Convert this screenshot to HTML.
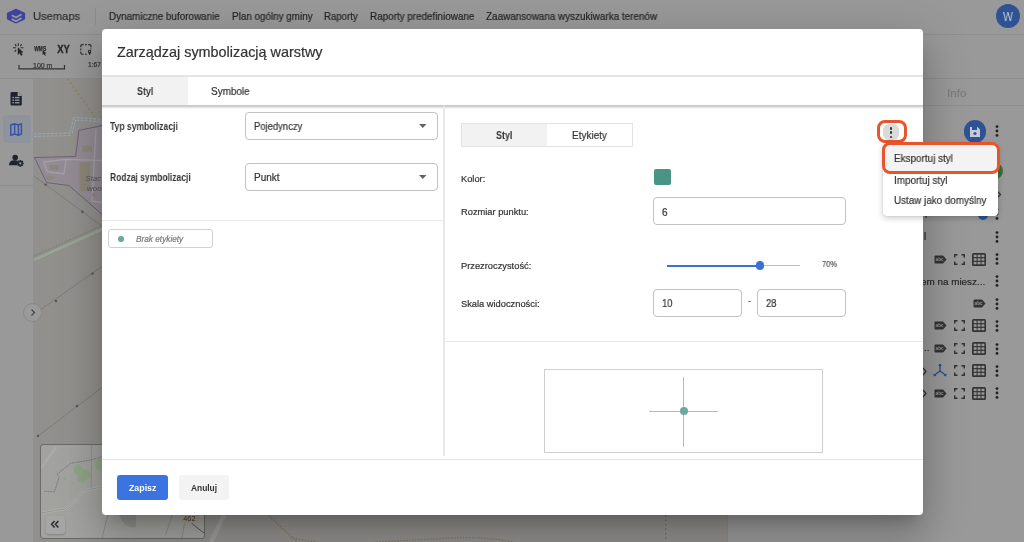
<!DOCTYPE html>
<html><head><meta charset="utf-8"><style>
html,body{margin:0;padding:0}
body{width:1024px;height:542px;position:relative;overflow:hidden;font-family:'Liberation Sans', sans-serif;background:#999}
body>div{position:absolute}
.t{white-space:nowrap;line-height:1;will-change:transform;-webkit-text-stroke:0.2px currentColor}
svg{will-change:transform}
.t[style*="bold"]{-webkit-text-stroke:0}
</style></head><body>
<div style="left:0px;top:0px;width:1024px;height:542px;background:#999999"></div>
<div style="left:34px;top:79px;width:694px;height:463px;background:#92908d"></div>
<svg style="position:absolute;left:0px;top:0px" width="1024" height="542" viewBox="0 0 1024 542"><path d="M34 157.5 L75.6 156.5 L78.9 130.3 L97.9 126.5 L104 125 L104 216 L97.9 210.7 L68.9 185.5 L46.6 182.6 L35.5 159.5 Z" fill="#948c95" stroke="#6c6175" stroke-width="1"/><path d="M43.7 162 L66 159.4 L64 174 L47.5 171.6 Z M66 159.4 L104 160.5 M96 129 L92 201 L104 203" stroke="#a3a1a4" stroke-width="1.3" fill="none"/><g fill="#8d867a"><rect x="82.4" y="145.8" width="9.7" height="5.8"/><rect x="49.5" y="165.2" width="9.7" height="4.8"/><rect x="46.6" y="175.9" width="6.8" height="3.8"/><rect x="79.5" y="162.3" width="10.7" height="29"/><rect x="92.1" y="193.3" width="4.8" height="3"/></g><text x="85.3" y="181.3" font-family="Liberation Sans" font-style="italic" font-size="8" fill="#57525c">Stac</text><text x="87" y="191" font-family="Liberation Sans" font-style="italic" font-size="8" fill="#57525c">woo</text><path d="M67.8 79 L99.3 123" stroke="#8f7f55" stroke-width="1.6" stroke-dasharray="1.5 3" fill="none"/><path d="M34 135.2 L70.8 134.2 L74.7 118.7 L104 120.6" stroke="#98a8b0" stroke-width="3.6" stroke-dasharray="3 1.2" fill="none"/><path d="M34 135.2 L70.8 134.2 L74.7 118.7 L104 120.6" stroke="#92908d" stroke-width="1.4" fill="none"/><path d="M34 176 L104 227.6" stroke="#727272" stroke-width="0.7" fill="none"/><circle cx="45.6" cy="184.6" r="1.2" fill="#555"/><circle cx="82.4" cy="211.7" r="1.2" fill="#555"/><path d="M36 313 L104 265" stroke="#727272" stroke-width="0.7" fill="none"/><circle cx="56" cy="301" r="1.2" fill="#555"/><circle cx="92.4" cy="273.6" r="1.2" fill="#555"/><path d="M38 436 L104 386" stroke="#727272" stroke-width="0.7" fill="none"/><circle cx="38" cy="436" r="1.2" fill="#555"/><circle cx="77" cy="406" r="1.2" fill="#555"/><path d="M34 260 L104 228.5" stroke="#86977d" stroke-width="5" fill="none"/><path d="M34 260 L104 228.5" stroke="#a0a19e" stroke-width="2.6" fill="none"/><path d="M34 256 L104 224.5" stroke="#6f6a72" stroke-width="0.8" stroke-dasharray="1.5 1.5" fill="none"/><path d="M269 515.7 L295 540 L298 542" stroke="#7f765e" stroke-width="1.2" stroke-dasharray="1.5 1.5" fill="none"/><path d="M290 538 L316 542 M370 542.5 Q420 539.5 466 537.5 Q495 538 515 542.5" stroke="#7f765e" stroke-width="1.2" stroke-dasharray="1.5 1.5" fill="none"/><path d="M665.7 515 L665.7 542" stroke="#6e6a58" stroke-width="1.2" stroke-dasharray="1.5 3" fill="none"/><path d="M224 515 L211 542" stroke="#9d9d9b" stroke-width="4.5" fill="none"/></svg>
<div style="left:40px;top:444px;width:164.5px;height:94.5px;border:1px solid #6a6a6a;border-radius:3px;background:#a2a29f;box-sizing:border-box"></div>
<svg style="position:absolute;left:41px;top:445px" width="62" height="92" viewBox="0 0 62 92"><g transform="translate(-41,-445)"><path d="M41 468 L56.2 447" stroke="#abaaa8" stroke-width="3" fill="none"/><path d="M41 513 Q52 511 64.7 509 Q70 505 75.7 500.4 Q80 494 84.2 490.7 Q92 488 104 487.5" stroke="#b0b0ae" stroke-width="2.6" fill="none"/><path d="M41 513 Q52 511 64.7 509 Q70 505 75.7 500.4 Q80 494 84.2 490.7 Q92 488 104 487.5" stroke="#8a8a88" stroke-width="0.7" fill="none"/><path d="M91.6 445 L91.2 488" stroke="#8e8e8c" stroke-width="0.8" fill="none"/><path d="M44.6 491.3 L54.4 491.9 L59.2 477.3 L57.2 474.2 L70.8 463.2 L90.3 460.2 L104 456" stroke="#7a7480" stroke-width="0.9" stroke-dasharray="2 0.8" fill="none"/><path d="M75 466 Q78 462 81 466 Q83 470 87 470 Q92 472 91 477 Q86 479 84 482 Q80 484 77 480 Q79 475 74.5 473 Q73 469 75 466Z" fill="#8fa486"/><path d="M95 462 Q99 457 104 458 L104 472 Q98 472 96 468Z" fill="#8fa486"/><circle cx="65" cy="478.5" r="1.3" fill="#8fa486"/><circle cx="72.5" cy="483" r="0.9" fill="#8fa486"/></g></svg>
<svg style="position:absolute;left:102px;top:515px" width="103" height="24" viewBox="0 0 103 24"><g transform="translate(-102,-515)"><path d="M107.8 515 L102 538 M172.3 515 L165.4 535.3 M186 515 L182 538" stroke="#858583" stroke-width="0.8" fill="none"/><path d="M191.8 523.5 L204 533" stroke="#555" stroke-width="1" fill="none"/><path d="M119 515 Q125 530 136 527 L136 515Z" fill="#939391"/><rect x="181.6" y="513" width="17.6" height="10" rx="1.5" fill="#a59f8e"/><text x="183.3" y="521.3" font-family="Liberation Sans" font-size="7.3" fill="#3a3a3a">462</text></g></svg>
<div style="left:45.5px;top:515.5px;width:19.5px;height:18.5px;background:#a6a6a6;border-radius:3px;box-shadow:0 1px 2px rgba(0,0,0,.2)"></div>
<svg style="position:absolute;left:44px;top:510px" width="24" height="24" viewBox="0 0 24 24"><g transform="translate(-44,-510)"><path d="M54.6 521 L51.6 524.2 L54.6 527.4 M58.4 521 L55.4 524.2 L58.4 527.4" stroke="#2a2a2a" stroke-width="1.5" fill="none"/></g></svg>
<div style="left:0px;top:79px;width:33px;height:463px;background:#999999"></div>
<div style="left:33px;top:79px;width:1px;height:463px;background:#909090"></div>
<div style="left:0px;top:185px;width:33px;height:1px;background:#8c8c8c"></div>
<div style="left:23px;top:302.5px;width:19px;height:19px;border-radius:50%;background:#9a9a9a;border:1px solid #888;box-sizing:border-box"></div>
<svg style="position:absolute;left:29px;top:308px" width="8" height="9" viewBox="0 0 8 9"><path d="M2.5 1.5 L5.5 4.5 L2.5 7.5" stroke="#444" stroke-width="1.2" fill="none"/></svg>
<div style="left:0px;top:34px;width:1024px;height:1px;background:#8e8e8e"></div>
<div style="left:0px;top:78px;width:728px;height:1px;background:#8e8e8e"></div>
<div style="left:728px;top:35px;width:296px;height:507px;background:#999999"></div>
<div style="left:728px;top:78px;width:296px;height:1px;background:#8e8e8e"></div>
<div style="left:728px;top:105px;width:296px;height:1px;background:#8e8e8e"></div>
<div style="left:727px;top:79px;width:1px;height:463px;background:#8c8c8c"></div>
<svg style="position:absolute;left:0px;top:0px" width="32" height="32" viewBox="0 0 32 32"><path d="M16 9.3 L24.5 13.4 L24.5 18.9 L16 23 L7.5 18.9 L7.5 13.4 Z" fill="#3d439e" stroke="#3d439e" stroke-width="1.2" stroke-linejoin="round"/><path d="M11.7 15.2 L16 17.6 L21.6 14.3 M11.7 19 L16 21.3 L21.6 18" stroke="#999" stroke-width="1.7" fill="none"/></svg>
<div class="t" style="left:33px;top:10.97px;font-size:11.5px;color:#2e2e2e;;transform:scaleX(0.9696);transform-origin:0 0">Usemaps</div>
<div style="left:95px;top:8px;width:1px;height:17px;background:#8c8c8c"></div>
<div class="t" style="left:109.4px;top:11.54px;font-size:10px;color:#262626;;transform:scaleX(0.9859);transform-origin:0 0">Dynamiczne buforowanie</div>
<div class="t" style="left:231.8px;top:11.54px;font-size:10px;color:#262626;;transform:scaleX(0.9863);transform-origin:0 0">Plan ogólny gminy</div>
<div class="t" style="left:324.1px;top:11.54px;font-size:10px;color:#262626;;transform:scaleX(0.9624);transform-origin:0 0">Raporty</div>
<div class="t" style="left:369.5px;top:11.54px;font-size:10px;color:#262626;;transform:scaleX(0.9875);transform-origin:0 0">Raporty predefiniowane</div>
<div class="t" style="left:485.5px;top:11.54px;font-size:10px;color:#262626;;transform:scaleX(0.9898);transform-origin:0 0">Zaawansowana wyszukiwarka terenów</div>
<div style="left:995.8px;top:4px;width:24.4px;height:24.4px;border-radius:50%;background:#2e5294"></div>
<div class="t" style="left:1003.2px;top:10.80px;font-size:12.4px;color:#c5ccd8;-webkit-text-stroke:0;transform:scaleX(0.8459);transform-origin:0 0">W</div>
<svg style="position:absolute;left:0px;top:34px" width="110" height="45" viewBox="0 0 110 45"><g transform="translate(0,-34)"><g stroke="#2a2a2a" stroke-width="1.1" fill="none" stroke-linecap="round"><path d="M18.2 43.5 V45.5 M15.3 44.6 L16 45.9 M21.4 44.5 L20.6 45.8 M13.4 47.7 H15.4 M21 47.7 H23 M15 51.4 L15.8 50.2"/></g><path d="M18 47.8 L18 54.4 L19.6 52.9 L21.1 55.4 L22.3 54.8 L20.9 52.4 L23 52.2 Z" fill="#262626" stroke="#262626" stroke-width="0.5" stroke-linejoin="round"/><text x="34.2" y="50.7" font-family="Liberation Sans" font-weight="bold" font-size="6.8" textLength="12" lengthAdjust="spacingAndGlyphs" fill="#2a2a2a" stroke="#2a2a2a" stroke-width="0.25">WMS</text><path d="M42.6 49.9 L42.6 55 L43.8 53.9 L45 55.7 L45.9 55.2 L44.8 53.4 L46.5 53.2 Z" fill="#262626" stroke="#999" stroke-width="0.6" paint-order="stroke" stroke-linejoin="round"/><text x="57.3" y="53.1" font-family="Liberation Sans" font-weight="bold" font-size="10.2" textLength="12.6" lengthAdjust="spacingAndGlyphs" fill="#2a2a2a" stroke="#2a2a2a" stroke-width="0.35">XY</text><path d="M80.8 47.2 V46.1 Q80.8 44.6 82.3 44.6 H83.6 M88.2 44.6 H89.5 Q91 44.6 91 46.1 V47.2 M80.8 51.6 V52.7 Q80.8 54.2 82.3 54.2 H83.6 M85 44.6 H86.8 M80.8 48.6 V50.2 M85 54.2 H86.8 M91 48.5 V49.4" stroke="#2a2a2a" stroke-width="1.15" fill="none"/><path d="M88 51.3 A1.6 1.6 0 0 1 91.2 51.3 Q91.2 53 89.6 55.2 Q88 53 88 51.3Z" fill="#262626"/><circle cx="89.6" cy="51.3" r="0.6" fill="#999"/><path d="M19 65 V68.8 H64.5 V65" stroke="#333" stroke-width="1.2" fill="none"/></g></svg>
<div class="t" style="left:33px;top:61.67px;font-size:7px;color:#333;">100 m</div>
<div class="t" style="left:87.8px;top:62.21px;font-size:6.6px;color:#333;">1:67</div>
<svg style="position:absolute;left:0px;top:80px" width="34" height="100" viewBox="0 0 34 100"><g transform="translate(0,-80)"><path d="M11.5 91.9 H17.6 L21.8 96.1 V104.4 Q21.8 105.4 20.8 105.4 H11.5 Q10.5 105.4 10.5 104.4 V92.9 Q10.5 91.9 11.5 91.9Z" fill="#1f2330"/><path d="M17.6 91.9 V96.1 H21.8Z" fill="#9a9a9a"/><g fill="#9a9a9a"><rect x="12.4" y="96.9" width="1.6" height="1.3"/><rect x="14.9" y="96.9" width="4.6" height="1.3"/><rect x="12.4" y="99.5" width="1.6" height="1.3"/><rect x="14.9" y="99.5" width="4.6" height="1.3"/><rect x="12.4" y="102.1" width="1.6" height="1.3"/><rect x="14.9" y="102.1" width="4.6" height="1.3"/></g></g></svg>
<div style="left:2.5px;top:115px;width:28px;height:28px;background:#8f949c;border-radius:4px"></div>
<svg style="position:absolute;left:0px;top:80px" width="34" height="100" viewBox="0 0 34 100"><g transform="translate(0,-80)"><path d="M10.8 125 L14.6 123.8 L18.4 125 L21.4 123.8 V134 L18.4 135.2 L14.6 134 L10.8 135.2 Z M14.6 123.8 V134 M18.4 125 V135.2" stroke="#3654a8" stroke-width="1.5" fill="none" stroke-linejoin="round"/><circle cx="15.2" cy="157.6" r="2.8" fill="#1f2330"/><path d="M9 165.2 Q9 160.3 14.6 160.3 Q16.5 160.3 17.6 160.8 L17.6 165.2 Z" fill="#1f2330"/><path d="M23.66 162.43 L23.66 164.37 L22.69 164.41 L22.35 165.00 L23.36 165.09 L21.99 166.46 L21.28 165.81 L20.62 165.98 L21.27 166.76 L19.33 166.76 L19.29 165.79 L18.70 165.45 L18.61 166.46 L17.24 165.09 L17.89 164.38 L17.72 163.72 L16.94 164.37 L16.94 162.43 L17.91 162.39 L18.25 161.80 L17.24 161.71 L18.61 160.34 L19.32 160.99 L19.98 160.82 L19.33 160.04 L21.27 160.04 L21.31 161.01 L21.90 161.35 L21.99 160.34 L23.36 161.71 L22.71 162.42 L22.88 163.08Z" fill="#1f2330"/><circle cx="20.3" cy="163.4" r="1.1" fill="#999"/></g></svg>
<div class="t" style="left:946.9px;top:87.18px;font-size:11.6px;color:#7a7a7a;">Info</div>
<div style="left:963.5px;top:120px;width:22.5px;height:22.5px;border-radius:50%;background:#2e5294"></div>
<svg style="position:absolute;left:969px;top:125.5px" width="12" height="12" viewBox="0 0 12 12"><path d="M1 1 H8.5 L11 3.5 V11 H1 Z" fill="#c5cbd6"/><rect x="3" y="1" width="5" height="3" fill="#2e5294"/><circle cx="6" cy="7.5" r="1.6" fill="#2e5294"/></svg>
<svg style="position:absolute;left:995.0px;top:124.30000000000001px" width="4" height="14" viewBox="0 0 4 14"><circle cx="2" cy="2.5999999999999996" r="1.4" fill="#222"/><circle cx="2" cy="7" r="1.4" fill="#222"/><circle cx="2" cy="11.4" r="1.4" fill="#222"/></svg>
<div style="left:987px;top:163px;width:16px;height:16px;border-radius:50%;background:#3d6b3d"></div>
<svg style="position:absolute;left:996px;top:190px" width="6" height="9" viewBox="0 0 6 9"><path d="M1 1 L4.5 4.5 L1 8" stroke="#333" stroke-width="1.3" fill="none"/></svg>
<div style="left:977.7px;top:208.8px;width:10.8px;height:10.8px;border-radius:50%;background:#2e5294"></div>
<div class="t" style="left:925px;top:207.63px;font-size:10px;color:#2a2a2a;">pomiaru...</div>
<svg style="position:absolute;left:995.0px;top:207px" width="4" height="14" viewBox="0 0 4 14"><circle cx="2" cy="2.5999999999999996" r="1.4" fill="#222"/><circle cx="2" cy="7" r="1.4" fill="#222"/><circle cx="2" cy="11.4" r="1.4" fill="#222"/></svg>
<div class="t" style="left:923.5px;top:231.94px;font-size:10px;color:#2a2a2a;">l</div>
<svg style="position:absolute;left:995.0px;top:230px" width="4" height="14" viewBox="0 0 4 14"><circle cx="2" cy="2.5999999999999996" r="1.4" fill="#222"/><circle cx="2" cy="7" r="1.4" fill="#222"/><circle cx="2" cy="11.4" r="1.4" fill="#222"/></svg>
<svg style="position:absolute;left:934px;top:254.89999999999998px" width="13" height="9" viewBox="0 0 13 9"><path d="M0.5 1.5 Q0.5 0.5 1.5 0.5 H9 L12.5 4.5 L9 8.5 H1.5 Q0.5 8.5 0.5 7.5 Z" fill="#333"/><text x="1.6" y="6.2" font-family="Liberation Sans" font-weight="bold" font-size="4.6" fill="#999">abc</text></svg>
<svg style="position:absolute;left:954.3px;top:253.89999999999998px" width="11" height="11" viewBox="0 0 11 11"><path d="M0.75 3.5 V0.75 H3.5 M7.5 0.75 H10.25 V3.5 M10.25 7.5 V10.25 H7.5 M3.5 10.25 H0.75 V7.5" stroke="#333" stroke-width="1.5" fill="none"/></svg>
<svg style="position:absolute;left:972.2px;top:252.89999999999998px" width="14" height="13" viewBox="0 0 14 13"><rect x="0" y="0" width="14" height="13" rx="1.5" fill="#333"/><g fill="#999"><rect x="1.7" y="1.7" width="2.9" height="2.4"/><rect x="5.6" y="1.7" width="2.9" height="2.4"/><rect x="9.5" y="1.7" width="2.9" height="2.4"/><rect x="1.7" y="5.3" width="2.9" height="2.4"/><rect x="5.6" y="5.3" width="2.9" height="2.4"/><rect x="9.5" y="5.3" width="2.9" height="2.4"/><rect x="1.7" y="8.9" width="2.9" height="2.4"/><rect x="5.6" y="8.9" width="2.9" height="2.4"/><rect x="9.5" y="8.9" width="2.9" height="2.4"/></g></svg>
<svg style="position:absolute;left:995.0px;top:252.39999999999998px" width="4" height="14" viewBox="0 0 4 14"><circle cx="2" cy="2.5999999999999996" r="1.4" fill="#222"/><circle cx="2" cy="7" r="1.4" fill="#222"/><circle cx="2" cy="11.4" r="1.4" fill="#222"/></svg>
<div class="t" style="left:921px;top:276.72px;font-size:9.9px;color:#2a2a2a;">em na miesz...</div>
<svg style="position:absolute;left:995.0px;top:274.2px" width="4" height="14" viewBox="0 0 4 14"><circle cx="2" cy="2.5999999999999996" r="1.4" fill="#222"/><circle cx="2" cy="7" r="1.4" fill="#222"/><circle cx="2" cy="11.4" r="1.4" fill="#222"/></svg>
<svg style="position:absolute;left:973px;top:299.2px" width="13" height="9" viewBox="0 0 13 9"><path d="M0.5 1.5 Q0.5 0.5 1.5 0.5 H9 L12.5 4.5 L9 8.5 H1.5 Q0.5 8.5 0.5 7.5 Z" fill="#333"/><text x="1.6" y="6.2" font-family="Liberation Sans" font-weight="bold" font-size="4.6" fill="#999">abc</text></svg>
<svg style="position:absolute;left:995.0px;top:296.7px" width="4" height="14" viewBox="0 0 4 14"><circle cx="2" cy="2.5999999999999996" r="1.4" fill="#222"/><circle cx="2" cy="7" r="1.4" fill="#222"/><circle cx="2" cy="11.4" r="1.4" fill="#222"/></svg>
<svg style="position:absolute;left:934px;top:321.4px" width="13" height="9" viewBox="0 0 13 9"><path d="M0.5 1.5 Q0.5 0.5 1.5 0.5 H9 L12.5 4.5 L9 8.5 H1.5 Q0.5 8.5 0.5 7.5 Z" fill="#333"/><text x="1.6" y="6.2" font-family="Liberation Sans" font-weight="bold" font-size="4.6" fill="#999">abc</text></svg>
<svg style="position:absolute;left:954.3px;top:320.4px" width="11" height="11" viewBox="0 0 11 11"><path d="M0.75 3.5 V0.75 H3.5 M7.5 0.75 H10.25 V3.5 M10.25 7.5 V10.25 H7.5 M3.5 10.25 H0.75 V7.5" stroke="#333" stroke-width="1.5" fill="none"/></svg>
<svg style="position:absolute;left:972.2px;top:319.4px" width="14" height="13" viewBox="0 0 14 13"><rect x="0" y="0" width="14" height="13" rx="1.5" fill="#333"/><g fill="#999"><rect x="1.7" y="1.7" width="2.9" height="2.4"/><rect x="5.6" y="1.7" width="2.9" height="2.4"/><rect x="9.5" y="1.7" width="2.9" height="2.4"/><rect x="1.7" y="5.3" width="2.9" height="2.4"/><rect x="5.6" y="5.3" width="2.9" height="2.4"/><rect x="9.5" y="5.3" width="2.9" height="2.4"/><rect x="1.7" y="8.9" width="2.9" height="2.4"/><rect x="5.6" y="8.9" width="2.9" height="2.4"/><rect x="9.5" y="8.9" width="2.9" height="2.4"/></g></svg>
<svg style="position:absolute;left:995.0px;top:318.9px" width="4" height="14" viewBox="0 0 4 14"><circle cx="2" cy="2.5999999999999996" r="1.4" fill="#222"/><circle cx="2" cy="7" r="1.4" fill="#222"/><circle cx="2" cy="11.4" r="1.4" fill="#222"/></svg>
<svg style="position:absolute;left:934px;top:344.2px" width="13" height="9" viewBox="0 0 13 9"><path d="M0.5 1.5 Q0.5 0.5 1.5 0.5 H9 L12.5 4.5 L9 8.5 H1.5 Q0.5 8.5 0.5 7.5 Z" fill="#333"/><text x="1.6" y="6.2" font-family="Liberation Sans" font-weight="bold" font-size="4.6" fill="#999">abc</text></svg>
<svg style="position:absolute;left:954.3px;top:343.2px" width="11" height="11" viewBox="0 0 11 11"><path d="M0.75 3.5 V0.75 H3.5 M7.5 0.75 H10.25 V3.5 M10.25 7.5 V10.25 H7.5 M3.5 10.25 H0.75 V7.5" stroke="#333" stroke-width="1.5" fill="none"/></svg>
<svg style="position:absolute;left:972.2px;top:342.2px" width="14" height="13" viewBox="0 0 14 13"><rect x="0" y="0" width="14" height="13" rx="1.5" fill="#333"/><g fill="#999"><rect x="1.7" y="1.7" width="2.9" height="2.4"/><rect x="5.6" y="1.7" width="2.9" height="2.4"/><rect x="9.5" y="1.7" width="2.9" height="2.4"/><rect x="1.7" y="5.3" width="2.9" height="2.4"/><rect x="5.6" y="5.3" width="2.9" height="2.4"/><rect x="9.5" y="5.3" width="2.9" height="2.4"/><rect x="1.7" y="8.9" width="2.9" height="2.4"/><rect x="5.6" y="8.9" width="2.9" height="2.4"/><rect x="9.5" y="8.9" width="2.9" height="2.4"/></g></svg>
<svg style="position:absolute;left:995.0px;top:341.7px" width="4" height="14" viewBox="0 0 4 14"><circle cx="2" cy="2.5999999999999996" r="1.4" fill="#222"/><circle cx="2" cy="7" r="1.4" fill="#222"/><circle cx="2" cy="11.4" r="1.4" fill="#222"/></svg>
<svg style="position:absolute;left:934px;top:388.5px" width="13" height="9" viewBox="0 0 13 9"><path d="M0.5 1.5 Q0.5 0.5 1.5 0.5 H9 L12.5 4.5 L9 8.5 H1.5 Q0.5 8.5 0.5 7.5 Z" fill="#333"/><text x="1.6" y="6.2" font-family="Liberation Sans" font-weight="bold" font-size="4.6" fill="#999">abc</text></svg>
<svg style="position:absolute;left:954.3px;top:387.5px" width="11" height="11" viewBox="0 0 11 11"><path d="M0.75 3.5 V0.75 H3.5 M7.5 0.75 H10.25 V3.5 M10.25 7.5 V10.25 H7.5 M3.5 10.25 H0.75 V7.5" stroke="#333" stroke-width="1.5" fill="none"/></svg>
<svg style="position:absolute;left:972.2px;top:386.5px" width="14" height="13" viewBox="0 0 14 13"><rect x="0" y="0" width="14" height="13" rx="1.5" fill="#333"/><g fill="#999"><rect x="1.7" y="1.7" width="2.9" height="2.4"/><rect x="5.6" y="1.7" width="2.9" height="2.4"/><rect x="9.5" y="1.7" width="2.9" height="2.4"/><rect x="1.7" y="5.3" width="2.9" height="2.4"/><rect x="5.6" y="5.3" width="2.9" height="2.4"/><rect x="9.5" y="5.3" width="2.9" height="2.4"/><rect x="1.7" y="8.9" width="2.9" height="2.4"/><rect x="5.6" y="8.9" width="2.9" height="2.4"/><rect x="9.5" y="8.9" width="2.9" height="2.4"/></g></svg>
<svg style="position:absolute;left:995.0px;top:386px" width="4" height="14" viewBox="0 0 4 14"><circle cx="2" cy="2.5999999999999996" r="1.4" fill="#222"/><circle cx="2" cy="7" r="1.4" fill="#222"/><circle cx="2" cy="11.4" r="1.4" fill="#222"/></svg>
<svg style="position:absolute;left:932px;top:362px" width="16" height="16" viewBox="0 0 16 16"><path d="M8 2 V9 L2.5 13 M8 9 L13.5 13" stroke="#2a4f95" stroke-width="1.4" fill="none"/><path d="M6 4 L8 1.5 L10 4Z M1 11.5 L2 14.5 L4.5 13.5Z M15 11.5 L14 14.5 L11.5 13.5Z" fill="#2a4f95"/></svg>
<svg style="position:absolute;left:954.3px;top:365.3px" width="11" height="11" viewBox="0 0 11 11"><path d="M0.75 3.5 V0.75 H3.5 M7.5 0.75 H10.25 V3.5 M10.25 7.5 V10.25 H7.5 M3.5 10.25 H0.75 V7.5" stroke="#333" stroke-width="1.5" fill="none"/></svg>
<svg style="position:absolute;left:972.2px;top:364.3px" width="14" height="13" viewBox="0 0 14 13"><rect x="0" y="0" width="14" height="13" rx="1.5" fill="#333"/><g fill="#999"><rect x="1.7" y="1.7" width="2.9" height="2.4"/><rect x="5.6" y="1.7" width="2.9" height="2.4"/><rect x="9.5" y="1.7" width="2.9" height="2.4"/><rect x="1.7" y="5.3" width="2.9" height="2.4"/><rect x="5.6" y="5.3" width="2.9" height="2.4"/><rect x="9.5" y="5.3" width="2.9" height="2.4"/><rect x="1.7" y="8.9" width="2.9" height="2.4"/><rect x="5.6" y="8.9" width="2.9" height="2.4"/><rect x="9.5" y="8.9" width="2.9" height="2.4"/></g></svg>
<svg style="position:absolute;left:995.0px;top:363.8px" width="4" height="14" viewBox="0 0 4 14"><circle cx="2" cy="2.5999999999999996" r="1.4" fill="#222"/><circle cx="2" cy="7" r="1.4" fill="#222"/><circle cx="2" cy="11.4" r="1.4" fill="#222"/></svg>
<svg style="position:absolute;left:922px;top:366.5px" width="5" height="9" viewBox="0 0 5 9"><path d="M1 1 L4 4.5 L1 8" stroke="#333" stroke-width="1.2" fill="none"/></svg>
<svg style="position:absolute;left:922px;top:388.5px" width="5" height="9" viewBox="0 0 5 9"><path d="M1 1 L4 4.5 L1 8" stroke="#333" stroke-width="1.2" fill="none"/></svg>
<div class="t" style="left:924px;top:343.22px;font-size:9.9px;color:#2a2a2a;">..</div>
<div style="left:102px;top:29px;width:821px;height:486px;background:#fff;border-radius:4px;box-shadow:0 11px 15px -7px rgba(0,0,0,.2),0 24px 38px 3px rgba(0,0,0,.14),0 9px 46px 8px rgba(0,0,0,.12)"></div>
<div class="t" style="left:116.9px;top:45.31px;font-size:14.4px;color:#333;">Zarządzaj symbolizacją warstwy</div>
<div style="left:102px;top:75px;width:821px;height:2px;background:#e4e4e4"></div>
<div style="left:102px;top:77px;width:86px;height:28px;background:#f2f2f2"></div>
<div style="left:102px;top:105px;width:821px;height:1.5px;background:#cdcdcd;box-shadow:0 1px 2px rgba(0,0,0,.14)"></div>
<div class="t" style="left:136.9px;top:85.71px;font-size:10.5px;color:#333;font-weight:bold;transform:scaleX(0.8513);transform-origin:0 0">Styl</div>
<div class="t" style="left:210.9px;top:86.93px;font-size:10px;color:#333;;transform:scaleX(0.9921);transform-origin:0 0">Symbole</div>
<div style="left:443.4px;top:106px;width:1.3px;height:350px;background:#e8e8ec"></div>
<div class="t" style="left:109.6px;top:121.73px;font-size:10px;color:#333;font-weight:bold;transform:scaleX(0.8550);transform-origin:0 0">Typ symbolizacji</div>
<div class="t" style="left:109.6px;top:172.94px;font-size:10px;color:#333;font-weight:bold;transform:scaleX(0.8492);transform-origin:0 0">Rodzaj symbolizacji</div>
<div style="left:245px;top:112px;width:191px;height:26px;border:1px solid #c2c2c2;border-radius:4px;background:#fff"></div>
<div class="t" style="left:253.5px;top:121.63px;font-size:10px;color:#333;;transform:scaleX(0.9425);transform-origin:0 0">Pojedynczy</div>
<svg style="position:absolute;left:419px;top:124px" width="8" height="5" viewBox="0 0 8 5"><path d="M0 0 L7.5 0 L3.75 4Z" fill="#636363"/></svg>
<div style="left:245px;top:163px;width:191px;height:26px;border:1px solid #c2c2c2;border-radius:4px;background:#fff"></div>
<div class="t" style="left:253.5px;top:172.63px;font-size:10px;color:#333;">Punkt</div>
<svg style="position:absolute;left:419px;top:175px" width="8" height="5" viewBox="0 0 8 5"><path d="M0 0 L7.5 0 L3.75 4Z" fill="#636363"/></svg>
<div style="left:102px;top:220px;width:341px;height:1px;background:#e8e8e8"></div>
<div style="left:108px;top:229px;width:103px;height:17px;border:1px solid #d0d0d0;border-radius:3px;background:#fff"></div>
<div style="left:118px;top:236px;width:5.6px;height:5.6px;border-radius:50%;background:#6aa99c"></div>
<div class="t" style="left:135.6px;top:235.92px;font-size:8.25px;color:#7a7a7a;font-style:italic">Brak etykiety</div>
<div style="left:461px;top:123px;width:170px;height:22px;border:1px solid #e3e3e3;background:#fff"></div>
<div style="left:462px;top:124px;width:85px;height:22px;background:#f2f2f2"></div>
<div class="t" style="left:496px;top:131.17px;font-size:10.2px;color:#333;font-weight:bold;transform:scaleX(0.8776);transform-origin:0 0">Styl</div>
<div class="t" style="left:572px;top:131.33px;font-size:10px;color:#333;;transform:scaleX(0.9938);transform-origin:0 0">Etykiety</div>
<div class="t" style="left:461.4px;top:175.13px;font-size:9.3px;color:#333;">Kolor:</div>
<div style="left:654px;top:169px;width:17px;height:16px;background:#4a9485;border-radius:2px"></div>
<div class="t" style="left:461.4px;top:207.53px;font-size:9.3px;color:#333;">Rozmiar punktu:</div>
<div style="left:653px;top:197px;width:191px;height:26px;border:1px solid #c2c2c2;border-radius:4px;background:#fff"></div>
<div class="t" style="left:662px;top:208.13px;font-size:10px;color:#333;">6</div>
<div class="t" style="left:461.4px;top:262.13px;font-size:9.3px;color:#333;">Przezroczystość:</div>
<div style="left:667px;top:264.5px;width:93px;height:2px;background:#3b6fd8"></div>
<div style="left:760px;top:264.7px;width:40px;height:1.4px;background:#a4c2f5"></div>
<div style="left:755.5px;top:261px;width:8.5px;height:8.5px;border-radius:50%;background:#3b6fd8"></div>
<div class="t" style="left:822.3px;top:260.38px;font-size:9px;color:#555;;transform:scaleX(0.8326);transform-origin:0 0">70%</div>
<div class="t" style="left:461.4px;top:299.73px;font-size:9.3px;color:#333;">Skala widoczności:</div>
<div style="left:653px;top:289px;width:87px;height:26px;border:1px solid #c2c2c2;border-radius:4px;background:#fff"></div>
<div style="left:757px;top:289px;width:87px;height:26px;border:1px solid #c2c2c2;border-radius:4px;background:#fff"></div>
<div class="t" style="left:662.3px;top:298.31px;font-size:10.5px;color:#333;;transform:scaleX(0.8984);transform-origin:0 0">10</div>
<div class="t" style="left:766.3px;top:298.31px;font-size:10.5px;color:#333;;transform:scaleX(0.8984);transform-origin:0 0">28</div>
<div class="t" style="left:747.5px;top:297.48px;font-size:9px;color:#555;">-</div>
<div style="left:444px;top:341px;width:479px;height:1px;background:#e8e8e8"></div>
<div style="left:544px;top:369px;width:277px;height:82px;border:1px solid #cfcfcf;background:#fff"></div>
<div style="left:683px;top:376.5px;width:1.3px;height:70px;background:#b8b8b8"></div>
<div style="left:649px;top:410.5px;width:69px;height:1.3px;background:#b8b8b8"></div>
<div style="left:679.5px;top:406.7px;width:8.5px;height:8.5px;border-radius:50%;background:#6ca89d"></div>
<div style="left:102px;top:459px;width:821px;height:1px;background:#e6e6ea"></div>
<div style="left:117px;top:474.5px;width:51px;height:25px;background:#3b73e0;border-radius:3px"></div>
<div class="t" style="left:128.9px;top:483.55px;font-size:8.8px;color:#fff;font-weight:bold">Zapisz</div>
<div style="left:179px;top:474.5px;width:50px;height:25px;background:#f3f3f3;border-radius:3px"></div>
<div class="t" style="left:191.1px;top:483.89px;font-size:8.4px;color:#333;font-weight:bold">Anuluj</div>
<div style="left:882.9px;top:124px;width:16.5px;height:16px;background:#dadada;border-radius:6px"></div>
<div style="left:889.9000000000001px;top:127.10000000000001px;width:2.6px;height:2.6px;border-radius:50%;background:#333"></div>
<div style="left:889.9000000000001px;top:131.1px;width:2.6px;height:2.6px;border-radius:50%;background:#333"></div>
<div style="left:889.9000000000001px;top:135.5px;width:2.6px;height:2.6px;border-radius:50%;background:#333"></div>
<div style="left:877.4px;top:120px;width:29.4px;height:23px;border:3.4px solid #e8542c;border-radius:8px;box-sizing:border-box"></div>
<div style="left:883px;top:143px;width:115.2px;height:73.3px;background:#fff;border-radius:4px;box-shadow:0 2px 6px rgba(0,0,0,.22),0 0 1px rgba(0,0,0,.2)"></div>
<div style="left:881.5px;top:141.9px;width:118.7px;height:32.5px;background:#f3f3f3;border:3.4px solid #e8542c;border-radius:8px;box-sizing:border-box"></div>
<div class="t" style="left:894.4px;top:153.31px;font-size:10.5px;color:#333;;transform:scaleX(0.9433);transform-origin:0 0">Eksportuj styl</div>
<div class="t" style="left:894.4px;top:174.71px;font-size:10.5px;color:#333;;transform:scaleX(0.9433);transform-origin:0 0">Importuj styl</div>
<div class="t" style="left:894.4px;top:194.81px;font-size:10.5px;color:#333;;transform:scaleX(0.9379);transform-origin:0 0">Ustaw jako domyślny</div>
</body></html>
